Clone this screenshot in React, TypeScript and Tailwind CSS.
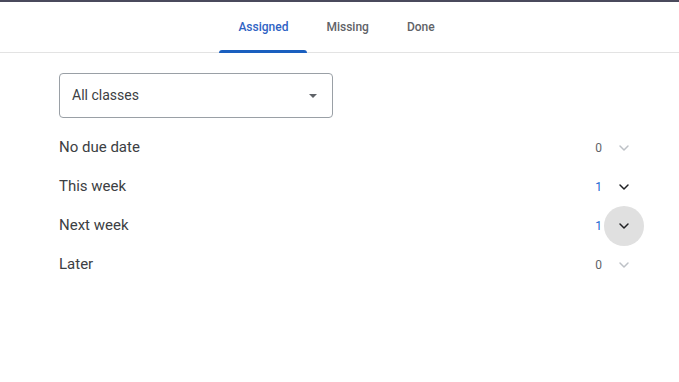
import { ChevronDown } from "lucide-react";

const tabs = ["Assigned", "Missing", "Done"];

const rows = [
  { label: "No due date", count: 0 },
  { label: "This week", count: 1 },
  { label: "Next week", count: 1, hover: true },
  { label: "Later", count: 0 },
];

export default function App() {
  return (
    <div className="w-[679px] h-[382px] bg-white border-t-[2px] border-[#4a4a5c] font-['Roboto',sans-serif] overflow-hidden">
      {/* Tabs */}
      <nav className="h-[51px] border-b border-[#e3e3e3] flex justify-center pr-[6px]">
        {tabs.map((t, i) => (
          <div
            key={t}
            className={`relative flex items-center px-[19px] text-[12px] font-medium ${
              i === 0 ? "text-[#2f63c4]" : "text-[#5f6368]"
            }`}
          >
            {t}
            {i === 0 && (
              <span className="absolute left-0 right-0 bottom-[-1px] h-[3px] rounded-t-[3px] bg-[#1a5fbf]" />
            )}
          </div>
        ))}
      </nav>

      <div className="pl-[59px] pr-[35px] pt-[20px]">
        {/* Class select */}
        <div className="w-[274px] h-[45px] border border-[#9aa0a6] rounded-[4px] flex items-center justify-between pl-[12px] pr-[15px]">
          <span className="text-[14px] text-[#3c4043]">All classes</span>
          <span className="w-0 h-0 border-l-[4px] border-r-[4px] border-t-[4px] border-l-transparent border-r-transparent border-t-[#5f6368]" />
        </div>

        {/* Due sections */}
        <div className="mt-[10px]">
          {rows.map((r) => (
            <div key={r.label} className="h-[39px] flex items-center justify-between">
              <span className="text-[15px] text-[#3c4043]">{r.label}</span>
              <div className="flex items-center gap-[2px]">
                <span className={`text-[12px] ${r.count ? "text-[#1967d2]" : "text-[#5f6368]"}`}>
                  {r.count}
                </span>
                <span
                  className={`w-10 h-10 rounded-full flex items-center justify-center ${
                    r.hover ? "bg-[#e0e0e0]" : ""
                  }`}
                >
                  <ChevronDown
                    size={16}
                    strokeWidth={2.2}
                    className={r.count ? "text-[#202124]" : "text-[#bdc1c6]"}
                  />
                </span>
              </div>
            </div>
          ))}
        </div>
      </div>
    </div>
  );
}
